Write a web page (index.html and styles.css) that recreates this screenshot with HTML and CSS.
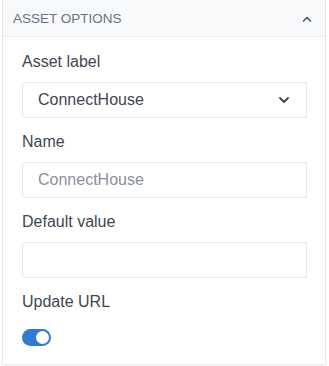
FILE: index.html
```html
<html lang="en">
<head>
  <meta charset="UTF-8">
  <meta name="viewport" content="width=device-width, initial-scale=1.0">
  <title>Asset Options</title>
  <link rel="stylesheet" href="styles.css">
</head>
<body>
  <div class="panel">
    <div class="panel-header">
      <span class="panel-title">ASSET OPTIONS</span>
      <svg class="chevron-up" width="10" height="6" viewBox="0 0 10 6">
        <path d="M1.5 5 L5 1.5 L8.5 5" fill="none" stroke="#4b5563" stroke-width="1.6" stroke-linecap="round" stroke-linejoin="round"/>
      </svg>
    </div>

    <div class="panel-body">
      <div class="field">
        <label>Asset label</label>
        <div class="select">
          <span>ConnectHouse</span>
          <svg width="12" height="8" viewBox="0 0 12 8">
            <path d="M2 2 L6 6 L10 2" fill="none" stroke="#374151" stroke-width="1.8" stroke-linecap="round" stroke-linejoin="round"/>
          </svg>
        </div>
      </div>

      <div class="field">
        <label>Name</label>
        <input type="text" placeholder="ConnectHouse">
      </div>

      <div class="field">
        <label>Default value</label>
        <input type="text">
      </div>

      <div class="field">
        <label>Update URL</label>
        <div class="toggle on"><div class="knob"></div></div>
      </div>
    </div>
  </div>
</body>
</html>
```

FILE: styles.css
```css
body{
  margin: 0;
  background: white;
  font-family: 'Liberation Sans', Arial, sans-serif;
}
.panel{
  width: 322px;
  margin-left: 2px;
  border: 1px solid #e5e7eb;
  border-top: 0;
}
.panel-header{
  height: 37px;
  background: #f8f9fb;
  border-bottom: 1px solid #eef0f3;
  display: flex;
  align-items: center;
  justify-content: space-between;
  padding: 1px 13px 0 10px;
  box-sizing: border-box;
}
.panel-title{
  font-size: 13.5px;
  color: #6b7280;
}
.panel-body{
  padding: 13px 18px 18px 19px;
}
.field{
  margin-bottom: 12px;
}
.field:last-child{
  margin-bottom: 0;
}
.field label{
  display: block;
  font-size: 16px;
  line-height: 24px;
  color: #3f4653;
  margin-bottom: 8px;
}
.select, input{
  box-sizing: border-box;
  width: 100%;
  height: 36px;
  border: 1px solid #e5e7eb;
  border-radius: 2px;
  font-family: inherit;
  font-size: 16px;
  padding: 0 15px;
  color: #3f4653;
  background: white;
}
.select{
  display: flex;
  align-items: center;
  justify-content: space-between;
  padding-right: 16px;
}
input{
  display: block;
  outline: none;
}
input::placeholder{
  color: #8a909b;
}
.toggle{
  width: 29px;
  height: 17px;
  border-radius: 9px;
  background: #2f7bd2;
  position: relative;
  margin-top: 15px;
}
.toggle .knob{
  position: absolute;
  top: 2px;
  right: 2px;
  width: 13px;
  height: 13px;
  border-radius: 50%;
  background: white;
}
```
